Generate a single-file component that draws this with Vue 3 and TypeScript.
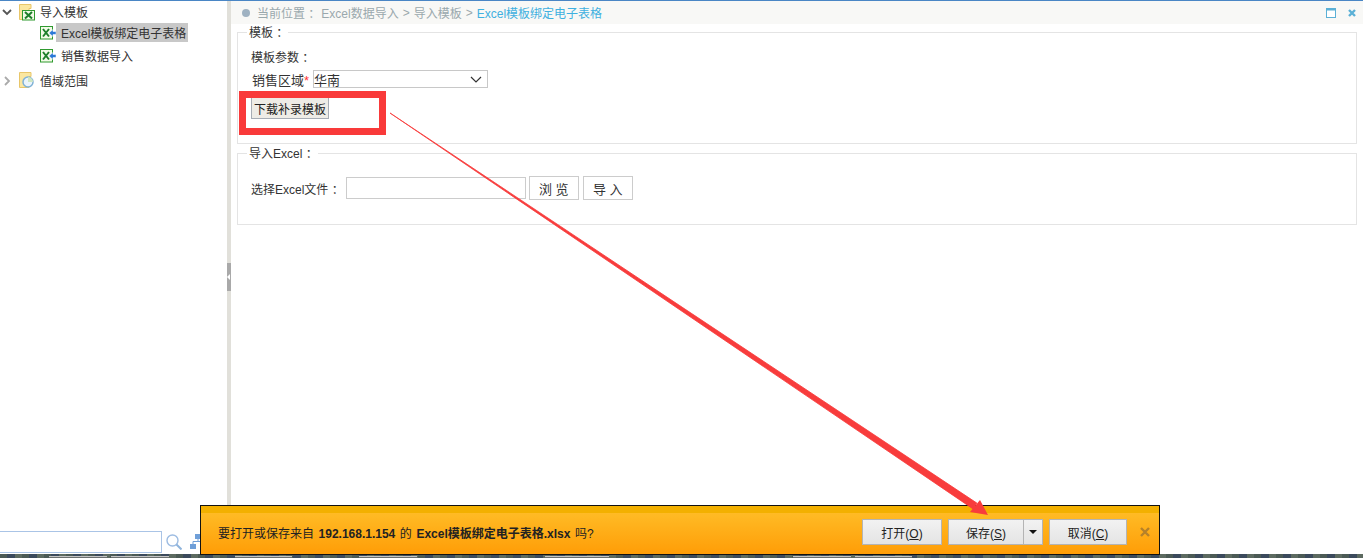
<template>
  <div class="page">
    <div class="main">
      <aside class="side">
        <ul class="tree">
          <li v-for="n in nodes" :key="n.label" class="node" :class="'lv' + n.level">
            <svg v-if="n.arrow" class="arrow" width="12" height="12" viewBox="0 0 12 12">
              <path :d="n.arrow === 'open' ? 'M2 4l4 4 4-4' : 'M4 2l4 4-4 4'" fill="none" :stroke="n.arrow === 'open' ? '#555' : '#aaa'" stroke-width="1.8" />
            </svg>
            <svg v-if="n.icon === 'folderExcel'" class="folder" width="17" height="17" viewBox="0 0 17 17">
              <path d="M1.500 0.500h11.500v4h-2v11h-9.500z" fill="#fbe7a0" stroke="#e8c66a" />
              <rect x="4.500" y="6.500" width="12" height="9.500" fill="#f3fbe8" stroke="#2f9a2f" />
              <path d="M7 8l7 6.500M14 8l-7 6.500" stroke="#1d7f2a" stroke-width="2" />
            </svg>
            <svg v-else-if="n.icon === 'folderChart'" class="folder" width="17" height="17" viewBox="0 0 17 17">
              <path d="M1.500 0.500h11.500v4h-2v11h-9.500z" fill="#fbe7a0" stroke="#e8c66a" />
              <circle cx="10" cy="10" r="5" fill="#eaf4fb" stroke="#7fb2d6" stroke-width="1.500" />
              <path d="M10 10V5a5 5 0 0 1 5 5z" fill="#cfe6c2" />
            </svg>
            <svg v-else class="sheet" width="16" height="14" viewBox="0 0 16 14">
              <rect x="0.500" y="0.500" width="12" height="12.500" fill="#f3fbe8" stroke="#2f9a2f" />
              <path d="M3 3l6 7.500M9 3l-6 7.500" stroke="#1d7f2a" stroke-width="2" />
              <path d="M9 7l4-3.500v2h3v3h-3v2z" fill="#2a78d6" stroke="#fff" stroke-width="0.500" />
            </svg>
            <span class="label" :class="{ picked: n.picked }">{{ n.label }}</span>
          </li>
        </ul>
        <div class="search">
          <div class="search-box"></div>
          <svg class="search-icon" width="16" height="16" viewBox="0 0 16 16">
            <circle cx="6.500" cy="6.500" r="5.500" fill="none" stroke="#9dbce2" stroke-width="1.400" />
            <path d="M10.500 10.500l5 5" stroke="#8fb4dc" stroke-width="2" />
          </svg>
          <svg width="11" height="16" viewBox="0 0 11 16">
            <path d="M5 0h6v5H5zM0 10h6v5H0z" fill="#6f9fd8" />
            <path d="M8 5v3M3 10V7.500h8" fill="none" stroke="#6f9fd8" />
          </svg>
        </div>
      </aside>

      <div class="splitter">
        <span class="grip"><i></i></span>
      </div>

      <section class="content">
        <header class="crumb">
          <span class="dot"></span>
          <span>当前位置 ：</span>
          <span class="crumb-path">Excel数据导入</span>
          <span class="sep">&gt;</span>
          <span>导入模板</span>
          <span class="sep">&gt;</span>
          <span class="current">Excel模板绑定电子表格</span>
          <span class="win-btns">
            <svg width="10" height="10" viewBox="0 0 10 10">
              <rect x="0.500" y="0.500" width="9" height="9" fill="#fff" stroke="#5bb0d6" />
              <rect width="10" height="2.500" fill="#5bb0d6" />
            </svg>
            <svg width="8" height="8" viewBox="0 0 8 8">
              <path d="M1 1l6 6M7 1l-6 6" stroke="#5bb0d6" stroke-width="2.400" />
            </svg>
          </span>
        </header>

        <fieldset class="group first">
          <legend>模板 ：</legend>
          <div class="group-body">
            <div class="param-title">模板参数 ：</div>
            <div class="param-row">
              <label>销售区域<i>*</i></label>
              <div class="select">
                <span>华南</span>
                <svg width="12" height="7" viewBox="0 0 12 7"><path d="M1 1l5 5 5-5" fill="none" stroke="#333" stroke-width="1.200" /></svg>
              </div>
            </div>
            <button class="dl-btn">下载补录模板</button>
          </div>
        </fieldset>

        <fieldset class="group second">
          <legend>导入Excel ：</legend>
          <div class="file-row">
            <label>选择Excel文件 ：</label>
            <div class="file-input"></div>
            <button class="plain-btn">浏 览</button>
            <button class="plain-btn last">导 入</button>
          </div>
        </fieldset>
      </section>
    </div>

    <div class="taskbar">
      <span
        v-for="t in tasks"
        :key="t.left"
        class="task"
        :style="{ left: t.left + 'px', width: t.width + 'px' }"
      ></span>
    </div>

    <div class="notify">
      <div class="notify-top"></div>
      <div class="notify-body">
        <p class="msg">要打开或保存来自 <b>192.168.1.154</b> 的 <b>Excel模板绑定电子表格.xlsx</b> 吗?</p>
        <button class="n-btn open">打开(<u>O</u>)</button>
        <div class="split-btn">
          <button class="n-btn save">保存(<u>S</u>)</button>
          <button class="n-btn caret"><span></span></button>
        </div>
        <button class="n-btn cancel">取消(<u>C</u>)</button>
        <svg class="n-close" width="10" height="10" viewBox="0 0 10 10">
          <path d="M1 1l8 8M9 1l-8 8" stroke="#b5812a" stroke-width="2.400" />
        </svg>
      </div>
    </div>

    <div class="red-box"></div>
    <svg class="red-arrow" width="1363" height="558" viewBox="0 0 1363 558">
      <path d="M390 113L976.900 503.100L973 508.900z" fill="#f83c3c" stroke="#f83c3c" stroke-width="0.800" />
      <path d="M988 515L970 512L980 500z" fill="#f83c3c" />
    </svg>
  </div>
</template>

<script setup lang="ts">
type TreeNode = {
  label: string
  level: number
  arrow?: 'open' | 'closed'
  icon: 'folderExcel' | 'folderChart' | 'excel'
  picked?: boolean
}

const nodes: TreeNode[] = [
  { label: '导入模板', level: 0, arrow: 'open', icon: 'folderExcel' },
  { label: 'Excel模板绑定电子表格', level: 1, icon: 'excel', picked: true },
  { label: '销售数据导入', level: 1, icon: 'excel' },
  { label: '值域范围', level: 0, arrow: 'closed', icon: 'folderChart' },
]

// bits of the desktop taskbar peeking out under the page
const tasks = [
  { left: 49, width: 58 },
  { left: 111, width: 58 },
  { left: 235, width: 57 },
  { left: 359, width: 58 },
  { left: 545, width: 64 },
  { left: 793, width: 58 },
  { left: 855, width: 57 },
]
</script>

<style>
html,
body {
  margin: 0;
  background: #fff;
  overflow: hidden;
}
</style>

<style scoped>
.page {
  position: relative;
  width: 1363px;
  height: 558px;
  overflow: hidden;
  font-family: "Liberation Sans", "Noto Sans CJK SC", sans-serif;
  font-size: 12px;
  color: #333;
  border-top: 1px solid #4a86c5;
  box-sizing: border-box;
}

.main {
  display: flex;
  height: 553px;
}

.side {
  width: 227px;
  flex-shrink: 0;
  display: flex;
  flex-direction: column;
  justify-content: space-between;
}

.tree {
  list-style: none;
  margin: 0;
  padding: 0;
}

.node {
  display: flex;
  align-items: center;
  height: 23px;
}

.node:first-child {
  height: 22px;
}

.node:first-child .label {
  margin-top: -2px;
}

.lv0 {
  padding-left: 1px;
}

.lv0 .arrow {
  margin-right: 5px;
}

.lv0 .label {
  margin-left: 5px;
}

.lv1 {
  padding-left: 40px;
}

.sheet {
  margin-top: -4px;
}

.lv1 .label {
  align-self: flex-start;
  padding: 4px 2px 0 5px;
  line-height: 15px;
  white-space: nowrap;
}

.picked {
  background: #c8c8c8;
}

.search {
  display: flex;
  align-items: center;
  gap: 8px;
  margin-left: -1px;
  padding-bottom: 1px;
}

.search-box {
  width: 163px;
  height: 22px;
  border: 1px solid #aac4e6;
  box-sizing: border-box;
  background: #fff;
}

.search-icon {
  margin-left: -4px;
}

.splitter {
  width: 4px;
  flex-shrink: 0;
  background: #e1e0da;
  display: flex;
  align-items: center;
}

.grip {
  width: 4px;
  height: 28px;
  background: #a9a9a9;
  margin-top: -1px;
  display: flex;
  align-items: center;
}

.grip i {
  border-top: 3px solid transparent;
  border-bottom: 3px solid transparent;
  border-right: 3px solid #fff;
}

.content {
  flex: 1;
  min-width: 0;
  padding-right: 6px;
}

.crumb {
  display: flex;
  align-items: center;
  height: 23px;
  margin-right: -6px;
  padding: 0 7px 0 11px;
  box-sizing: border-box;
  background: #f8f8f6;
  color: #9aa8ad;
  white-space: nowrap;
}

.dot {
  width: 8px;
  height: 8px;
  border-radius: 50%;
  background: #9fb2c2;
  margin-right: 7px;
}

.crumb-path {
  margin-left: 1px;
}

.sep {
  margin: 0 4px;
}

.current {
  color: #3fb0e0;
}

.win-btns {
  margin-left: auto;
  display: flex;
  align-items: center;
  gap: 12px;
}

.group {
  margin: 0 0 1px 6px;
  padding: 0;
  border: 1px solid #e4e4e4;
  min-width: 0;
  box-sizing: border-box;
}

.group legend {
  margin-left: 9px;
  padding: 2px 0 0 2px;
  line-height: 14px;
  color: #333;
}

.first {
  height: 120px;
}

.group-body {
  padding-left: 13px;
}

.param-title {
  margin-top: 8px;
  line-height: 20px;
}

.param-row {
  display: flex;
  align-items: center;
  margin-top: 2px;
  height: 18px;
  padding-left: 1px;
  font-size: 13px;
}

.param-row i {
  color: #f33;
  font-style: normal;
}

.select {
  width: 175px;
  height: 18px;
  box-sizing: border-box;
  border: 1px solid #c8c8c8;
  display: flex;
  align-items: center;
  justify-content: space-between;
  padding: 0 5px 0 0;
  margin-left: 4px;
}

.dl-btn {
  display: block;
  margin: 9px 0 0 0;
  height: 22px;
  width: 78px;
  padding: 0;
  font: inherit;
  color: #222;
  background: #eeece6;
  border: 1px solid #a7adb5;
}

.second {
  height: 80px;
}

.file-row {
  display: flex;
  align-items: center;
  padding: 15px 0 0 13px;
}

.file-input {
  width: 180px;
  height: 22px;
  box-sizing: border-box;
  border: 1px solid #ccc;
  margin-left: 2px;
}

.plain-btn {
  width: 50px;
  height: 24px;
  margin-left: 3px;
  padding: 0;
  font: inherit;
  font-size: 13px;
  color: #333;
  background: #fff;
  border: 1px solid #ccc;
}

.plain-btn.last {
  margin-left: 4px;
}

.taskbar {
  position: relative;
  height: 4px;
  background: repeating-linear-gradient(90deg, #4b5a55 0 7px, #3b4a5c 7px 15px, #5c6a60 15px 22px);
}

.task {
  position: absolute;
  top: 2px;
  height: 2px;
  box-sizing: border-box;
  border-top: 1px solid #c4c4c4;
  background: #6b7070;
}

.notify {
  position: absolute;
  left: 200px;
  top: 504px;
  width: 960px;
  height: 50px;
  box-sizing: border-box;
  border: 1px solid #111;
  background: linear-gradient(#ffc02a, #ff9d07);
}

.notify-top {
  height: 7px;
  background: #f3b000;
}

.notify-body {
  display: flex;
  align-items: center;
  height: 41px;
  box-sizing: border-box;
  padding: 0 0 3px 17px;
  color: #222;
}

.msg {
  margin: 0;
  flex: 1;
  white-space: nowrap;
  word-spacing: 1.2px;
}

.n-btn {
  height: 26px;
  padding: 0;
  font: inherit;
  color: #222;
  background: linear-gradient(#f2f2f2, #e4e4e4);
  border: 1px solid #b4b4b4;
}

.open {
  width: 80px;
}

.split-btn {
  display: flex;
  margin-left: 6px;
}

.save {
  width: 76px;
}

.caret {
  width: 19px;
  border-left: none;
  display: flex;
  align-items: center;
  justify-content: center;
}

.caret span {
  border-left: 4px solid transparent;
  border-right: 4px solid transparent;
  border-top: 4px solid #111;
}

.cancel {
  width: 78px;
  margin-left: 6px;
}

.n-close {
  margin: 0 9px 0 13px;
}

.red-box {
  position: absolute;
  left: 239px;
  top: 90px;
  width: 147px;
  height: 44px;
  box-sizing: border-box;
  border: 7px solid #f93a3a;
}

.red-arrow {
  position: absolute;
  left: 0;
  top: -1px;
  pointer-events: none;
}
</style>
